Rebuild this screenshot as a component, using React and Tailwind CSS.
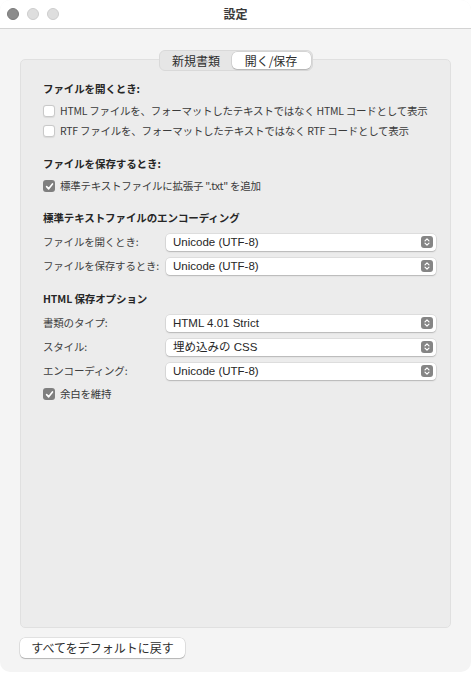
import React from "react";

const jp = { fontFamily: '"Noto Sans CJK JP", sans-serif' };
const latin = { fontFamily: '"Liberation Sans", "Noto Sans CJK JP", sans-serif' };

const Checkbox = ({ checked }) =>
  checked ? (
    <span className="flex h-[12px] w-[12px] shrink-0 items-center justify-center rounded-[3px] bg-[#7f7f7f]">
      <svg width="9" height="9" viewBox="0 0 10 10">
        <path d="M1.8 5.2 L4.1 7.6 L8.3 2.2" fill="none" stroke="#fff" strokeWidth="1.8" strokeLinecap="round" strokeLinejoin="round" />
      </svg>
    </span>
  ) : (
    <span className="block h-[12px] w-[12px] shrink-0 rounded-[3px] border border-[#c9c9c9] bg-white shadow-[0_0.5px_1px_rgba(0,0,0,0.08)]" />
  );

const CheckRow = ({ checked, children, className = "" }) => (
  <div className={`flex h-[16px] items-center gap-[5px] ${className}`}>
    <Checkbox checked={checked} />
    <span className="whitespace-nowrap text-[10.5px] leading-[16px] tracking-[-0.25px] text-[#3a3a3a]" style={jp}>
      {children}
    </span>
  </div>
);

const Header = ({ children, className = "" }) => (
  <div className={`h-[16px] whitespace-nowrap text-[10.5px] font-bold leading-[16px] tracking-[-0.1px] text-[#262626] ${className}`} style={jp}>
    {children}
  </div>
);

const Stepper = () => (
  <span className="flex h-[12px] w-[12px] items-center justify-center rounded-[3px] bg-[#858585]">
    <svg width="8" height="10" viewBox="0 0 8 10">
      <path d="M2 3.8 L4 1.8 L6 3.8 M2 6.2 L4 8.2 L6 6.2" fill="none" stroke="#fff" strokeWidth="1.2" strokeLinecap="round" strokeLinejoin="round" />
    </svg>
  </span>
);

const PopupRow = ({ label, value, className = "" }) => (
  <div className={`flex h-[18px] items-center ${className}`}>
    <span className="w-[123px] shrink-0 whitespace-nowrap text-[10.5px] leading-[16px] tracking-[-0.2px] text-[#3f3f3f]" style={jp}>
      {label}
    </span>
    <div className="flex h-[17px] flex-1 items-center justify-between rounded-[4px] bg-white pl-[7px] pr-[3px] shadow-[0_0_0_0.5px_rgba(0,0,0,0.12),0_1px_1.5px_rgba(0,0,0,0.18)]">
      <span className="whitespace-nowrap text-[11.5px] leading-[17px] text-[#262626]" style={latin}>
        {value}
      </span>
      <Stepper />
    </div>
  </div>
);

export default function App() {
  return (
    <div className="h-[673px] w-[471px] bg-white">
      <div className="flex h-[672px] w-[471px] flex-col overflow-hidden rounded-[10px] bg-[#f4f4f4]">
        {/* Title bar */}
        <div className="relative flex h-[29px] shrink-0 items-center justify-center border-b border-[#d3d3d3] bg-white">
          <div className="absolute left-[7px] top-[8px] flex gap-[8px]">
            <span className="h-[12px] w-[12px] rounded-full border border-[#7a7a7a] bg-[#8c8c8c]" />
            <span className="h-[12px] w-[12px] rounded-full border border-[#cdcdcd] bg-[#dedede]" />
            <span className="h-[12px] w-[12px] rounded-full border border-[#cdcdcd] bg-[#dedede]" />
          </div>
          <span className="text-[12px] font-bold text-[#3a3a3a]" style={jp}>
            設定
          </span>
        </div>

        {/* Body */}
        <div className="flex flex-1 flex-col px-[20px] pt-[21px]">
          <div className="relative z-10 flex justify-center">
            <div className="flex h-[21px] items-center rounded-[6px] border border-[#d9d9d9] bg-[#e6e6e6] p-[1px]" style={jp}>
              <div className="flex h-full w-[71px] items-center justify-center text-[12px] text-[#2e2e2e]">
                新規書類
              </div>
              <div className="flex h-full w-[79px] items-center justify-center rounded-[5px] bg-white text-[12px] text-[#2e2e2e] shadow-[0_0_0_0.5px_rgba(0,0,0,0.15),0_1px_1px_rgba(0,0,0,0.15)]">
                開く/保存
              </div>
            </div>
          </div>

          <div className="-mt-[12px] h-[569px] rounded-[5px] border border-[#e0e0e0] bg-[#ececec] pl-[22px] pr-[14px] pt-[21px]">
            <Header>ファイルを開くとき:</Header>
            <CheckRow className="mt-[6px]">
              HTML ファイルを、フォーマットしたテキストではなく HTML コードとして表示
            </CheckRow>
            <CheckRow className="mt-[4px]">
              RTF ファイルを、フォーマットしたテキストではなく RTF コードとして表示
            </CheckRow>

            <Header className="mt-[17px]">ファイルを保存するとき:</Header>
            <CheckRow checked className="mt-[6px]">
              標準テキストファイルに拡張子 ".txt" を追加
            </CheckRow>

            <Header className="mt-[16px]">標準テキストファイルのエンコーディング</Header>
            <PopupRow className="mt-[7px]" label="ファイルを開くとき:" value="Unicode (UTF-8)" />
            <PopupRow className="mt-[6px]" label="ファイルを保存するとき:" value="Unicode (UTF-8)" />

            <Header className="mt-[16px]">HTML 保存オプション</Header>
            <PopupRow className="mt-[7px]" label="書類のタイプ:" value="HTML 4.01 Strict" />
            <PopupRow className="mt-[6px]" label="スタイル:" value="埋め込みの CSS" />
            <PopupRow className="mt-[6px]" label="エンコーディング:" value="Unicode (UTF-8)" />
            <CheckRow checked className="mt-[6px]">
              余白を維持
            </CheckRow>
          </div>

          <div className="mt-[10px]">
            <button
              className="flex h-[20px] w-[165px] items-center justify-center rounded-[5px] bg-white text-[12px] text-[#2e2e2e] shadow-[0_0_0_0.5px_rgba(0,0,0,0.15),0_1px_1px_rgba(0,0,0,0.2)]"
              style={jp}
            >
              すべてをデフォルトに戻す
            </button>
          </div>
        </div>
      </div>
    </div>
  );
}
